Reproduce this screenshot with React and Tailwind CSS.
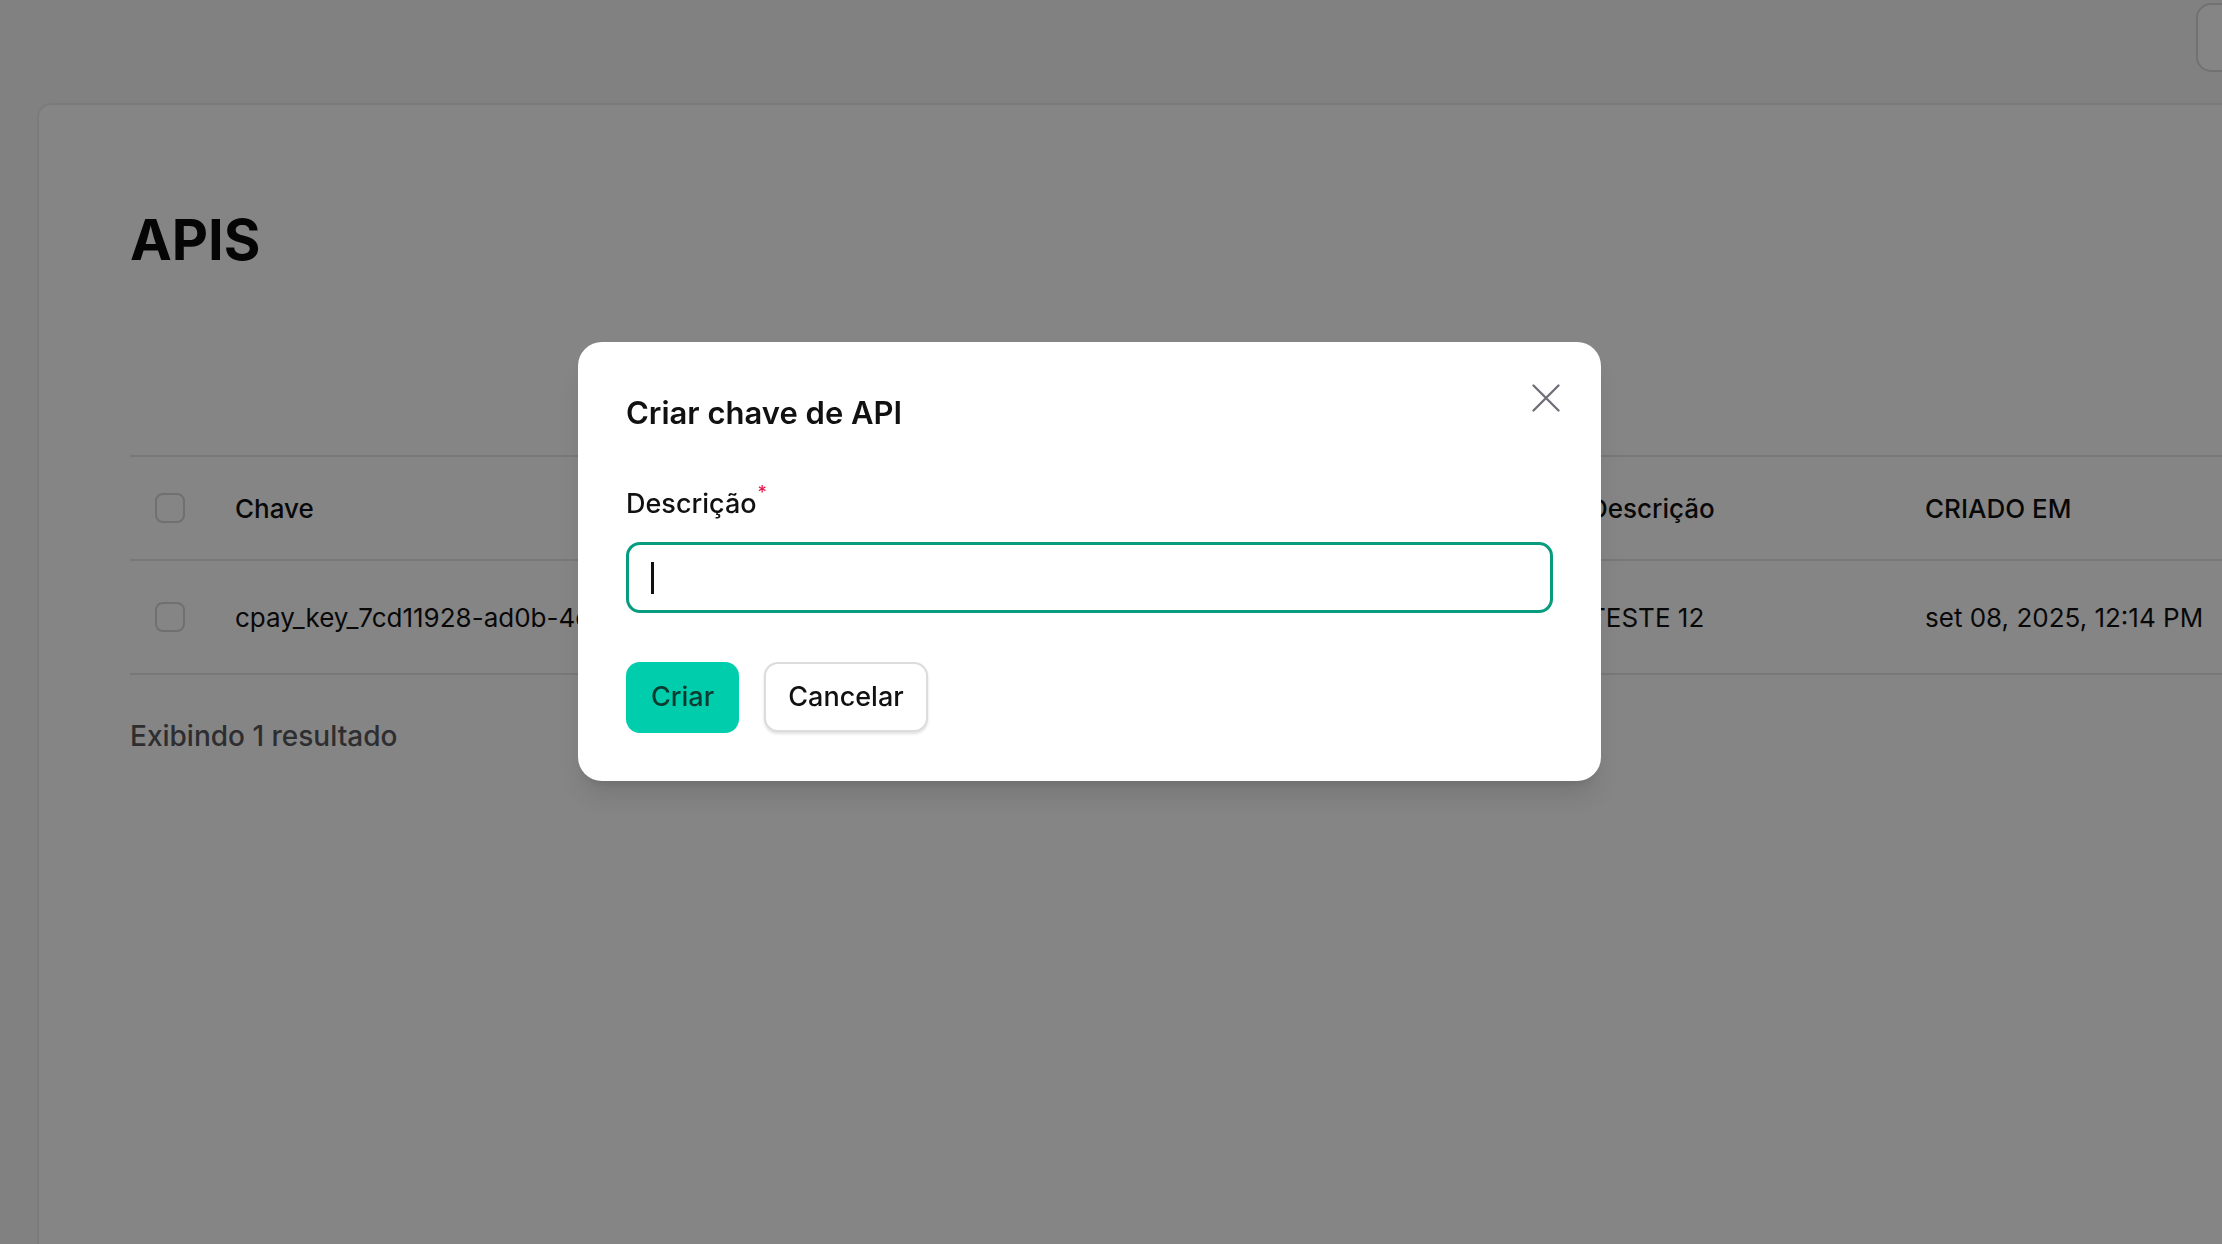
import React from 'react';

const rows = [
  { id: 1, chave: 'cpay_key_7cd11928-ad0b-4e1f-9c2a-53b8e0f7a1d4', descricao: 'TESTE 12', criado: 'set 08, 2025, 12:14 PM' },
];

const cols = 'grid grid-cols-[105px_1354px_336px_1fr] items-center';

function Checkbox() {
  return <span className="block w-[30px] h-[30px] rounded-[8px] border-2 border-[#d6d6d8] bg-white" />;
}

export default function App() {
  return (
    <div className="relative h-screen min-h-[1244px] w-full overflow-hidden bg-[#f8f8fa] font-['Inter','Liberation_Sans',sans-serif] text-[#111111]">
      {/* topo */}
      <div className="flex h-[103px] justify-end">
        <div className="mt-[3px] -mr-[94px] h-[69px] w-[120px] rounded-[15px] border-2 border-[#d8d8da] bg-white" />
      </div>

      {/* card */}
      <div className="ml-[37px] w-[2300px] h-[1200px] rounded-[14px] border-2 border-[#ececee] bg-white pl-[91px] pt-[107px]">
        <h1 className="text-[56px] leading-[56px] font-bold text-[#0a0a0c]">APIS</h1>

        <div className="mt-[187px] w-[2200px] text-[26px]">
          <div className={`${cols} h-[106px] border-y-2 border-[#e6e6e8] font-medium`}>
            <div className="pl-[25px]"><Checkbox /></div>
            <div>Chave</div>
            <div>Descrição</div>
            <div>CRIADO EM</div>
          </div>
          {rows.map(r => (
            <div key={r.id} className={`${cols} h-[114px] border-b-2 border-[#e6e6e8]`}>
              <div className="pl-[25px]"><Checkbox /></div>
              <div className="whitespace-nowrap">{r.chave}</div>
              <div className="whitespace-nowrap">{r.descricao}</div>
              <div className="whitespace-nowrap">{r.criado}</div>
            </div>
          ))}
          <p className="mt-[45px] text-[28px] leading-[32px] font-medium text-[#58585c]">Exibindo 1 resultado</p>
        </div>
      </div>

      {/* overlay */}
      <div className="fixed inset-0 bg-black/[0.48]" />

      {/* modal */}
      <div className="absolute left-[578px] top-[342px] w-[1023px] rounded-[24px] bg-white p-12 shadow-xl">
        <button className="absolute right-[41px] top-[42px] text-[#6e6e78]">
          <svg width="28" height="28" viewBox="0 0 28 28" fill="none" stroke="currentColor" strokeWidth="2.3" strokeLinecap="round">
            <path d="M1.5 1.5l25 25M26.5 1.5l-25 25" />
          </svg>
        </button>
        <h2 className="text-[31px] leading-[46px] font-semibold text-[#111111]">Criar chave de API</h2>

        <label className="mt-[52px] flex h-[32px] items-start text-[27px] leading-[32px] font-medium text-[#111111]">
          Descrição<span className="ml-[1px] -mt-[4px] text-[18px] leading-none text-[#e5174a]">*</span>
        </label>
        <div className="mt-[22px] flex h-[71px] items-center rounded-[14px] border-[3px] border-[#079c7e] px-[22px]">
          <span className="block h-[32px] w-[3px] bg-[#111111]" />
        </div>

        <div className="mt-[49px] flex gap-[25px]">
          <button className="h-[71px] w-[113px] rounded-[14px] bg-[#00cdac] text-[27px] font-medium text-[#0b3a31]">Criar</button>
          <button className="h-[70px] w-[164px] rounded-[14px] border-2 border-[#dcdcde] bg-white text-[27px] font-medium text-[#111111] shadow-[0_2px_3px_rgba(0,0,0,0.12)]">Cancelar</button>
        </div>
      </div>
    </div>
  );
}
